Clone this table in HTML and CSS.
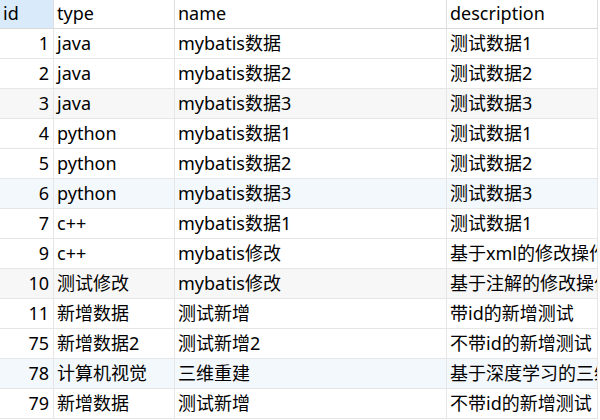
FILE: index.html
```html
<!DOCTYPE html>
<html lang="zh-CN">
<head>
  <meta charset="UTF-8">
  <title>tb_course</title>
  <link rel="stylesheet" href="styles.css">
</head>
<body>
  <div class="grid">
    <div class="row head">
      <div class="cell sel">id</div>
      <div class="cell">type</div>
      <div class="cell">name</div>
      <div class="cell">description</div>
    </div>
    <div class="row">
      <div class="cell num">1</div><div class="cell">java</div><div class="cell">mybatis数据</div><div class="cell">测试数据1</div>
    </div>
    <div class="row">
      <div class="cell num">2</div><div class="cell">java</div><div class="cell">mybatis数据2</div><div class="cell">测试数据2</div>
    </div>
    <div class="row alt">
      <div class="cell num">3</div><div class="cell">java</div><div class="cell">mybatis数据3</div><div class="cell">测试数据3</div>
    </div>
    <div class="row">
      <div class="cell num">4</div><div class="cell">python</div><div class="cell">mybatis数据1</div><div class="cell">测试数据1</div>
    </div>
    <div class="row">
      <div class="cell num">5</div><div class="cell">python</div><div class="cell">mybatis数据2</div><div class="cell">测试数据2</div>
    </div>
    <div class="row hover">
      <div class="cell num">6</div><div class="cell">python</div><div class="cell">mybatis数据3</div><div class="cell">测试数据3</div>
    </div>
    <div class="row">
      <div class="cell num">7</div><div class="cell">c++</div><div class="cell">mybatis数据1</div><div class="cell">测试数据1</div>
    </div>
    <div class="row">
      <div class="cell num">9</div><div class="cell">c++</div><div class="cell">mybatis修改</div><div class="cell">基于xml的修改操作</div>
    </div>
    <div class="row alt">
      <div class="cell num">10</div><div class="cell">测试修改</div><div class="cell">mybatis修改</div><div class="cell">基于注解的修改操作</div>
    </div>
    <div class="row">
      <div class="cell num">11</div><div class="cell">新增数据</div><div class="cell">测试新增</div><div class="cell">带id的新增测试</div>
    </div>
    <div class="row">
      <div class="cell num">75</div><div class="cell">新增数据2</div><div class="cell">测试新增2</div><div class="cell">不带id的新增测试</div>
    </div>
    <div class="row hover">
      <div class="cell num">78</div><div class="cell">计算机视觉</div><div class="cell">三维重建</div><div class="cell">基于深度学习的三维重建</div>
    </div>
    <div class="row">
      <div class="cell num">79</div><div class="cell">新增数据</div><div class="cell">测试新增</div><div class="cell">不带id的新增测试</div>
    </div>
  </div>
</body>
</html>
```

FILE: styles.css
```css
body {
  margin: 0;
  background: #fff;
  font-family: "Noto Sans", "Noto Sans CJK SC", sans-serif;
  font-size: 18px;
  color: #000;
}
.grid {
  width: 598px;
}
.row {
  display: grid;
  grid-template-columns: 54px 121px 272px 151px;
  height: 30px;
}
.row.head {
  height: 29px;
}
.cell {
  box-sizing: border-box;
  border-right: 1px solid #e6e6e6;
  border-bottom: 1px solid #e6e6e6;
  padding: 0 2px 0 3px;
  line-height: 28px;
  white-space: nowrap;
  overflow: hidden;
}
.head .cell {
  line-height: 27px;
  border-bottom-color: #d9d9d9;
  border-right-color: #dedede;
}
.head .sel {
  background: #d9eafa;
}
.num {
  text-align: right;
  padding-right: 4px;
}
.alt {
  background: #f7f7f7;
}
.hover {
  background: #f3f8fd;
}
```
